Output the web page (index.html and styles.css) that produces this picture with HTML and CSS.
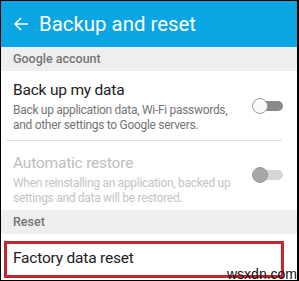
FILE: index.html
```html
<!DOCTYPE html>
<html>
<head>
<meta charset="utf-8">
<link rel="stylesheet" href="styles.css">
</head>
<body>
<div class="frame">
  <header class="appbar">
    <svg class="back" width="16" height="16" viewBox="0 0 16 16"><path d="M15 8H2M8 2L2 8l6 6" fill="none" stroke="#ffffff" stroke-width="1.6"/></svg>
    <span class="title">Backup and reset</span>
  </header>
  <div class="section">Google account</div>
  <div class="row first">
    <div class="texts">
      <div class="rtitle">Back up my data</div>
      <div class="rsub">Back up application data, Wi-Fi passwords,<br>and other settings to Google servers.</div>
    </div>
    <div class="toggle on"><span class="knob"></span></div>
  </div>
  <div class="divider"></div>
  <div class="row disabled">
    <div class="texts">
      <div class="rtitle">Automatic restore</div>
      <div class="rsub">When reinstalling an application, backed up<br>settings and data will be restored.</div>
    </div>
    <div class="toggle off"><span class="knob"></span></div>
  </div>
  <div class="section">Reset</div>
  <div class="factory">Factory data reset</div>
  <div class="watermark">wsxdn.com</div>
</div>
</body>
</html>
```
FILE: styles.css
```css
html, body { margin: 0; padding: 0; background: #fff; }
.frame {
  position: relative;
  width: 299px; height: 281px;
  box-sizing: border-box;
  border: 1px solid #000;
  border-right-width: 2px;
  overflow: hidden;
  font-family: Roboto, "Liberation Sans", sans-serif;
  background: #fff;
}
.appbar {
  height: 46px;
  background: #0aa6e4;
  display: flex; align-items: center;
  padding-left: 12px;
  gap: 10px;
}
.back { display: block; }
.title { color: #fff; font-size: 20.4px; }
.section {
  height: 24px; line-height: 24px;
  background: #eeeeee;
  padding-left: 12px;
  font-size: 12.5px; font-weight: 500;
  color: #757575;
}
.row {
  display: flex;
  padding: 8px 0 8px 12px;
  height: 53px;
}
.row.disabled { padding-top: 11px; height: 50px; }
.texts { width: 239px; white-space: nowrap; }
.rtitle { font-size: 15.5px; line-height: 22px; color: #212121; letter-spacing: -0.2px; }
.rsub { font-size: 12px; line-height: 15px; color: #757575; letter-spacing: -0.3px; margin-top: 2px; }
.disabled .rtitle { color: #bdbdbd; }
.disabled .rsub { color: #c4c4c4; }
.divider { height: 1px; background: #e0e0e0; margin: 0 15px 0 5px; }
.toggle {
  position: relative;
  width: 31px; height: 16px;
  margin: 19px 0 0 0;
}
.toggle::before {
  content: ""; position: absolute;
  left: 4px; right: 0; top: 3px; height: 10px;
  border-radius: 5px;
}
.toggle .knob {
  position: absolute; left: 0; top: 0;
  width: 16px; height: 16px; border-radius: 50%;
  box-sizing: border-box;
}
.toggle.on::before { background: #8a8a8a; }
.toggle.on .knob { background: #fafafa; border: 1px solid #9e9e9e; }
.toggle.off::before { background: #d6d6d6; }
.toggle.off .knob { background: #a8a8a8; border: 1px solid #9a9a9a; }
.row.disabled .toggle { margin-top: 15px; }
.factory {
  margin: 7px 13px 0 3px;
  height: 31px;
  border: 3px solid #c2262e;
  padding-left: 6px;
  font-size: 15.5px; line-height: 29px;
  letter-spacing: -0.2px;
  color: #212121;
}
.watermark {
  position: absolute; left: 226px; top: 265px;
  font-family: "Liberation Sans", Arial, sans-serif;
  font-size: 14px; color: #111;
}
```
